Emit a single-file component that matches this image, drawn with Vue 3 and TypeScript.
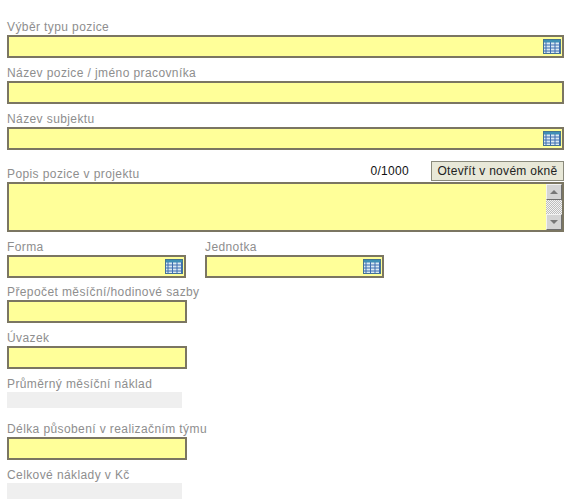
<script setup lang="ts">
type Field = {
  label: string
  kind: 'text' | 'select' | 'readonly'
}

const topFields: Field[] = [
  { label: 'Výběr typu pozice', kind: 'select' },
  { label: 'Název pozice / jméno pracovníka', kind: 'text' },
  { label: 'Název subjektu', kind: 'select' }
]

const pairFields: Field[] = [
  { label: 'Forma', kind: 'select' },
  { label: 'Jednotka', kind: 'select' }
]

const bottomFields: Field[] = [
  { label: 'Přepočet měsíční/hodinové sazby', kind: 'text' },
  { label: 'Úvazek', kind: 'text' },
  { label: 'Průměrný měsíční náklad', kind: 'readonly' },
  { label: 'Délka působení v realizačním týmu', kind: 'text' },
  { label: 'Celkové náklady v Kč', kind: 'readonly' }
]

const gridColumns = [3, 7.5, 12, 16.5]
const gridRows = [6, 9, 12]
</script>

<template>
  <form class="form" @submit.prevent>
    <div v-for="field in topFields" :key="field.label" class="field">
      <label class="label">{{ field.label }}</label>
      <div class="control">
        <input class="input" type="text" />
        <svg v-if="field.kind === 'select'" class="picker" viewBox="0 0 18 15">
          <rect x="0" y="0" width="18" height="15" fill="#dbe9f2" />
          <rect x="0" y="0" width="18" height="3.5" fill="#3f8fb5" />
          <rect x="0.5" y="0.5" width="17" height="14" fill="none" stroke="#47748f" />
          <path v-for="c in gridColumns" :key="c" :d="`M${c} 3V15`" stroke="#3f6fb0" />
          <path v-for="r in gridRows" :key="r" :d="`M0 ${r}H18`" stroke="#3f6fb0" />
        </svg>
      </div>
    </div>

    <div class="memo">
      <div class="memo-head">
        <label class="label">Popis pozice v projektu</label>
        <span class="counter">0/1000</span>
        <button class="open-btn" type="button">Otevřít v novém okně</button>
      </div>
      <div class="memo-box">
        <div class="memo-area"></div>
        <div class="scrollbar">
          <span class="scroll-btn"><i class="arrow up"></i></span>
          <span class="scroll-track"></span>
          <span class="scroll-btn"><i class="arrow down"></i></span>
        </div>
      </div>
    </div>

    <div class="pair">
      <div v-for="field in pairFields" :key="field.label" class="field pair-field">
        <label class="label">{{ field.label }}</label>
        <div class="control">
          <input class="input" type="text" />
          <svg class="picker" viewBox="0 0 18 15">
            <rect x="0" y="0" width="18" height="15" fill="#dbe9f2" />
            <rect x="0" y="0" width="18" height="3.5" fill="#3f8fb5" />
            <rect x="0.5" y="0.5" width="17" height="14" fill="none" stroke="#47748f" />
            <path v-for="c in gridColumns" :key="c" :d="`M${c} 3V15`" stroke="#3f6fb0" />
            <path v-for="r in gridRows" :key="r" :d="`M0 ${r}H18`" stroke="#3f6fb0" />
          </svg>
        </div>
      </div>
    </div>

    <div v-for="field in bottomFields" :key="field.label" class="field short">
      <label class="label">{{ field.label }}</label>
      <div v-if="field.kind === 'readonly'" class="readonly"></div>
      <div v-else class="control">
        <input class="input" type="text" />
      </div>
    </div>
  </form>
</template>

<style>
html,
body {
  background: #fff;
}
</style>

<style scoped>
.form {
  width: 579px;
  height: 504px;
  box-sizing: border-box;
  padding: 20px 15px 0 7px;
  overflow: hidden;
  font-family: "Liberation Sans", Arial, sans-serif;
  font-size: 12px;
}

.field {
  margin-bottom: 8px;
}

.field.short {
  width: 180px;
}

.field.pair-field {
  width: 179px;
  margin-bottom: 7px;
}

.label {
  display: block;
  height: 15px;
  line-height: 15px;
  color: #8e8e8e;
  letter-spacing: 0.4px;
  white-space: nowrap;
}

.control {
  position: relative;
}

.input {
  display: block;
  width: 100%;
  height: 23px;
  box-sizing: border-box;
  margin: 0;
  padding: 0 3px;
  border: 2px solid #7b7662;
  border-radius: 0;
  outline: none;
  background: #ffff99;
}

.picker {
  position: absolute;
  top: 4px;
  right: 3px;
  width: 18px;
  height: 15px;
}

.memo {
  margin-bottom: 8px;
}

.memo-head {
  display: flex;
  align-items: flex-end;
  height: 24px;
}

.memo-head .label {
  flex: 1;
}

.counter {
  margin-right: 22px;
  padding-bottom: 2px;
  line-height: 18px;
  letter-spacing: 0.3px;
  color: #111;
}

.open-btn {
  width: 133px;
  height: 20px;
  margin: 0 0 1px;
  padding: 0;
  border: 1px solid #8a8a7c;
  border-radius: 0;
  background: #e8e8d8;
  color: #222;
  font: inherit;
  letter-spacing: 0.3px;
}

.memo-box {
  display: flex;
  height: 50px;
  box-sizing: border-box;
  border: 2px solid #7b7662;
  background: #ffff99;
}

.memo-area {
  flex: 1;
}

.scrollbar {
  display: flex;
  flex-direction: column;
  width: 16px;
}

.scroll-btn {
  display: flex;
  align-items: center;
  justify-content: center;
  height: 16px;
  box-sizing: border-box;
  border: 1px solid;
  border-color: #f2f2f2 #6e6e6e #6e6e6e #f2f2f2;
  background: #d4d4d4;
}

.scroll-track {
  flex: 1;
  background-color: #eee;
  background-image: repeating-conic-gradient(#bdbdbd 0 25%, #f4f4f4 0 50%);
  background-size: 2px 2px;
}

.arrow {
  width: 0;
  height: 0;
  border-left: 4px solid transparent;
  border-right: 4px solid transparent;
}

.arrow.up {
  border-bottom: 4px solid #777;
}

.arrow.down {
  border-top: 4px solid #777;
}

.pair {
  display: flex;
  gap: 19px;
}

.readonly {
  width: 175px;
  height: 16px;
  margin-bottom: 14px;
  background: #efefef;
}
</style>
